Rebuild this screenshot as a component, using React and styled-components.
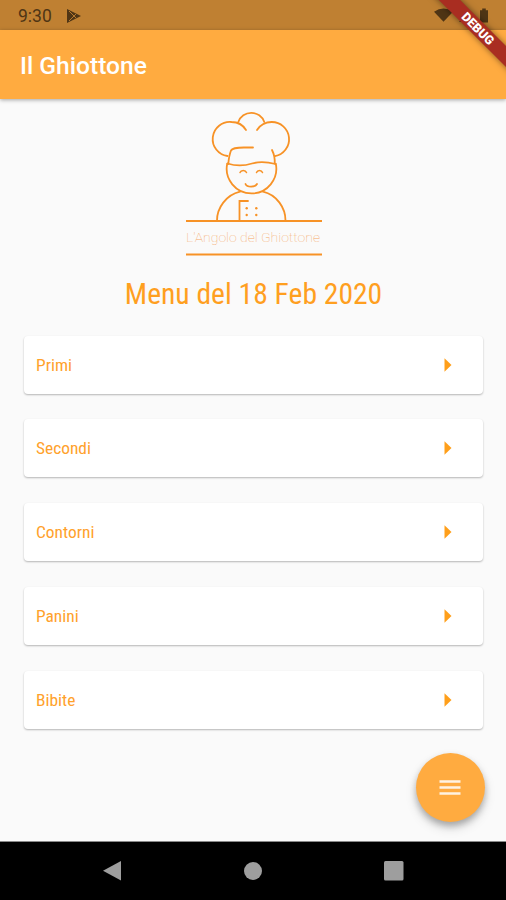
import React, { Component } from 'react'
import styled, { createGlobalStyle } from 'styled-components'

const GlobalStyle = createGlobalStyle`
  * {
    box-sizing: border-box;
  }
  body {
    margin: 0;
    background: #fafafa;
    font-family: Roboto, 'Liberation Sans', sans-serif;
  }
`

const Screen = styled.div`
  position: relative;
  display: flex;
  flex-direction: column;
  width: 506px;
  height: 900px;
  overflow: hidden;
  background: #fafafa;
`

const StatusBar = styled.div`
  display: flex;
  align-items: center;
  height: 30px;
  padding: 2px 18px 0 18px;
  background: #bf8032;
  color: #4f3515;
  font-size: 17.5px;
  line-height: 28px;
`

const PlayIcon = styled.svg`
  margin: -1px 0 0 14px;
`

const StatusIcons = styled.div`
  display: flex;
  align-items: center;
  gap: 6px;
  margin: -2px 0 0 auto;
`

const AppBar = styled.header`
  display: flex;
  align-items: center;
  height: 69px;
  flex: none;
  padding: 2px 20px 0;
  background: #ffab40;
  box-shadow: 0 1px 4px rgba(0, 0, 0, 0.35);
`

const Title = styled.h1`
  margin: 0;
  color: #fff;
  font-size: 24.6px;
  font-weight: 500;
`

const DebugBanner = styled.div`
  position: absolute;
  top: 21px;
  right: -43.5px;
  width: 144px;
  height: 15px;
  background: #a92d21;
  box-shadow: 0 0 6px rgba(0, 0, 0, 0.5);
  color: #fff;
  font-size: 12.5px;
  font-weight: 900;
  line-height: 15px;
  text-align: center;
  transform: rotate(45deg);
`

const Content = styled.main`
  display: flex;
  flex: 1;
  flex-direction: column;
  align-items: center;
  padding: 6px 23px 0 24px;
`

const Logo = styled.svg`
  display: block;
  flex: none;
  margin-left: 2px;
`

const Heading = styled.h2`
  margin: 9px 0 21.8px;
  color: #ff9f1f;
  font-size: 29.6px;
  font-weight: 370;
  font-stretch: 75%;
  line-height: 40px;
  white-space: nowrap;
`

const MenuList = styled.div`
  display: flex;
  flex-direction: column;
  gap: 25.7px;
  width: 100%;
`

const MenuCard = styled.div`
  display: flex;
  align-items: center;
  justify-content: space-between;
  height: 58px;
  padding: 0 31px 0 12px;
  border-radius: 4px;
  background: #fff;
  box-shadow: 0 1px 2px rgba(0, 0, 0, 0.28);
  color: #ffa12b;
  font-size: 17.4px;
  font-stretch: 75%;
`

const Fab = styled.button`
  position: absolute;
  top: 753px;
  left: 415.5px;
  display: flex;
  align-items: center;
  justify-content: center;
  width: 69px;
  height: 69px;
  padding: 0;
  border: none;
  border-radius: 50%;
  background: #ffab40;
  box-shadow: 0 4px 6px rgba(0, 0, 0, 0.24), 0 6px 12px rgba(0, 0, 0, 0.14);
`

const NavBar = styled.nav`
  display: flex;
  align-items: center;
  justify-content: space-between;
  height: 59px;
  padding: 0 102px;
  border-top: 1px solid #8a8a8a;
  background: #000;
`

const ChefLogo = () => (
  <Logo width="150" height="160" viewBox="0 0 150 160">
    <g fill="none" stroke="#f79226" strokeWidth="1.8" strokeLinecap="round">
      <path d="M66 25C63 20 58 17 51.5 17A17.12 17.12 0 0 0 47.5 51" />
      <path d="M58.3 17A13.8 13.8 0 0 1 84.3 17" />
      <path d="M77 25C80 20 86 17 91.5 17A17.25 17.25 0 0 1 95 51.2" />
      <path d="M73 42.5H64C58 42.5 52 43.5 51 45.5C50 48 48.7 54 48.3 59" />
      <path d="M92 45C94 49 95 54 94.7 58.5" />
      <path d="M47.5 58.5C54 60.5 64 61 72 58.5C80 56 88 57 95.5 59" />
      <path d="M47.2 58.7A24.8 24.8 0 1 0 95.8 58.7" />
      <path d="M60 67.5C61 64.8 65.5 64.8 66.5 67.5" strokeWidth="1.5" />
      <path d="M76.5 67.5C77.5 64.8 81.5 64.8 82.5 67.5" strokeWidth="1.5" />
      <path d="M65.5 79C67 82.5 75 82.5 77 79" />
      <path d="M37 115.5C37 103 46 90 60 86.7" />
      <path d="M83 86.7C97 90 105.5 103 105.5 115.5" />
      <path d="M59.5 115V96H68" />
      <path d="M6 116H142M6 149.6H142" strokeWidth="2" strokeLinecap="butt" />
    </g>
    <g fill="#f79226">
      <circle cx="66.7" cy="103.3" r="1.2" />
      <circle cx="76.3" cy="103.3" r="1.2" />
      <circle cx="66.7" cy="110" r="1.2" />
      <circle cx="76.3" cy="110" r="1.2" />
    </g>
    <text
      x="6"
      y="137"
      textLength="134"
      lengthAdjust="spacingAndGlyphs"
      fill="#f5a866"
      fontSize="12.2"
      fontWeight="100"
    >
      L'Angolo del Ghiottone
    </text>
  </Logo>
)

class App extends Component {
  state = {
    date: '18 Feb 2020',
    categories: ['Primi', 'Secondi', 'Contorni', 'Panini', 'Bibite']
  }

  render() {
    return (
      <Screen>
        <GlobalStyle />
        <StatusBar>
          9:30
          <PlayIcon width="16" height="14" viewBox="0 0 16 14">
            <path d="M1 0V14L11 9L15 7L11 5Z" fill="#4f3515" />
            <path d="M3 2L10 9M3 12L10 5" stroke="#bf8032" strokeWidth="0.9" />
          </PlayIcon>
          <StatusIcons>
            <svg width="19" height="14" viewBox="0 0 20 14">
              <path d="M0 3.5Q10 -3 20 3.5L10 14Z" fill="#4f3515" />
            </svg>
            <svg width="15" height="16" viewBox="0 0 15 16">
              <path d="M11 3V15H0Z" fill="#4f3515" />
            </svg>
            <svg width="8" height="15" viewBox="0 0 9 16">
              <path d="M0 2H2.5V0H6.5V2H9V16H0Z" fill="#4f3515" />
            </svg>
          </StatusIcons>
        </StatusBar>
        <AppBar>
          <Title>Il Ghiottone</Title>
        </AppBar>
        <Content>
          <ChefLogo />
          <Heading>Menu del {this.state.date}</Heading>
          <MenuList>
            {this.state.categories.map(name => (
              <MenuCard key={name}>
                {name}
                <svg width="8" height="14" viewBox="0 0 8 14">
                  <path d="M0.5 0.3L7.5 7L0.5 13.7Z" fill="#ff9f1a" />
                </svg>
              </MenuCard>
            ))}
          </MenuList>
        </Content>
        <NavBar>
          <svg width="20" height="22" viewBox="0 0 20 22">
            <path d="M19 1V20.5L1 10.7Z" fill="#9e9e9e" />
          </svg>
          <svg width="18" height="18" viewBox="0 0 18 18">
            <circle cx="9" cy="9" r="9" fill="#9e9e9e" />
          </svg>
          <svg width="20" height="20" viewBox="0 0 20 20">
            <rect width="19.5" height="19.5" rx="1.5" fill="#9e9e9e" />
          </svg>
        </NavBar>
        <Fab>
          <svg width="22" height="16" viewBox="0 0 22 16">
            <path d="M0.5 1.5H21.5M0.5 7.5H21.5M0.5 13.5H21.5" stroke="#fff3e2" strokeWidth="2.5" />
          </svg>
        </Fab>
        <DebugBanner>DEBUG</DebugBanner>
      </Screen>
    )
  }
}

export default App
